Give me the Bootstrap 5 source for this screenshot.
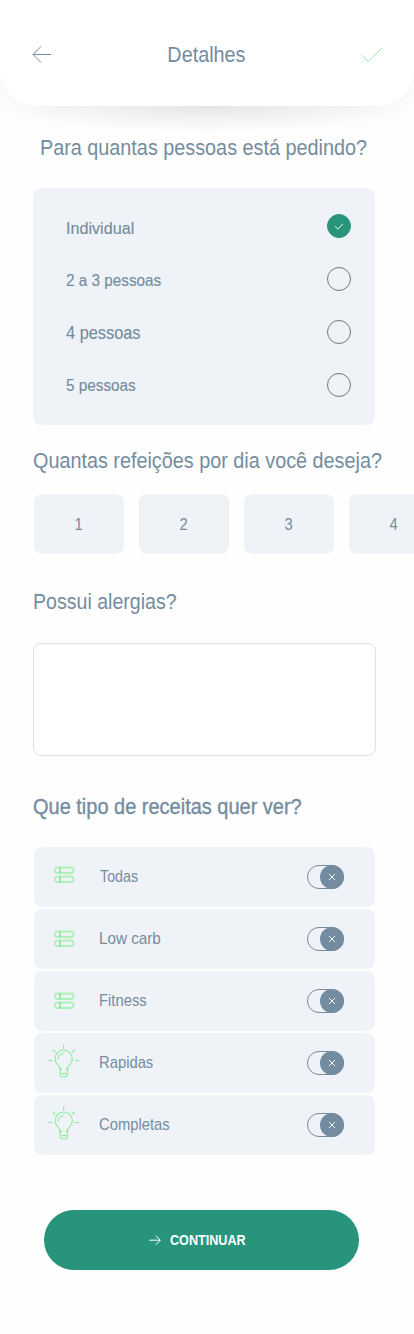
<!DOCTYPE html>
<html lang="pt-BR">
<head>
<meta charset="utf-8">
<meta name="viewport" content="width=device-width, initial-scale=1">
<title>Detalhes</title>
<link href="https://cdn.jsdelivr.net/npm/bootstrap@5.3.0/dist/css/bootstrap.min.css" rel="stylesheet">
<style>
  :root { --slate:#748ca0; --panel:#eff3f8; --brand:#28947c; --mint:#86ee96; }
  body { font-family:"Liberation Sans",Arial,sans-serif; color:var(--slate); background:#fefefe; min-height:1334px; overflow:hidden; }
  svg { display:block; fill:none; flex:none; }
  .topbar { height:106px; padding:3px 31px 0 32px; position:relative; }
  .topbar::before { content:""; position:absolute; inset:0; z-index:-1; border-radius:0 0 36px 36px; background:#fff; box-shadow:0 6px 26px rgba(0,0,0,.04); }
  .topbar::after { content:""; position:absolute; left:0; right:0; top:106px; height:30px; background:radial-gradient(ellipse 190px 28px at 50% 0,rgba(0,0,0,.08),rgba(0,0,0,.035) 50%,transparent); }
  .tx { display:inline-block; white-space:nowrap; transform:scaleX(.9); transform-origin:0 50%; }
  .heading { font-size:22px; line-height:26px; margin:0; font-weight:400; }
  .topbar .tx { transform-origin:center; }
  .topbar svg { margin-bottom:2px; }
  .q-people { margin:29px 0 0 40px; }
  .q-meals { margin:23px 0 0 33px; }
  .q-allergy { margin:35px 0 0 33px; }
  .q-allergy .tx { transform:scaleX(.89); }
  .q-recipes { margin:38px 0 0 33px; }
  .q-recipes .tx { -webkit-text-stroke:.35px var(--slate); transform:scaleX(.908); }
  .people { width:342px; height:237px; margin:27px 0 0 33px; padding:11px 24px 0 33px; background:var(--panel); border-radius:8px; }
  .choice { height:53px; font-size:17px; }
  .choice .tx { transform:scaleX(.9); -webkit-text-stroke:.15px var(--slate); margin-top:3px; }
  .choice .wide { transform:scaleX(.95); margin-top:7px; }
  .choice .next { margin-top:5px; }
  .choice .large { font-size:18px; transform:scaleX(.908); }
  .dot { width:24px; height:24px; border:1px solid #737679; border-radius:50%; }
  .dot.on { background:var(--brand); border-color:var(--brand); }
  .meals { margin:20px 0 0 34px; gap:15px; overflow:hidden; }
  .meal { flex:0 0 90px; height:60px; padding-top:2px; background:var(--panel); border-radius:8px; font-size:17px; }
  .meal .tx { transform:scaleX(.87); transform-origin:center; }
  .notes { width:343px; height:113px; margin:28px 0 0 33px; border:1px solid #dfe1ea; border-radius:8px; resize:none; background:#fff; box-shadow:none; }
  .recipes { margin:27px 0 0 34px; width:341px; gap:2px; }
  .recipe { height:60px; background:var(--panel); border-radius:8px; padding:0 31px 0 14px; font-size:17px; }
  .recipe .tx { transform:scaleX(.87); margin-left:19px; }
  .recipe .slim { transform:scaleX(.84); margin-left:20px; }
  .recipe .roomy { transform:scaleX(.895); }
  .lift { margin-top:-4px; }
  .pill { width:37px; height:24px; border:1px solid var(--slate); border-radius:12px; }
  .knob { width:24px; height:24px; margin:-1px; border-radius:50%; background:var(--slate); }
  .go { width:315px; height:60px; margin:55px 0 0 44px; border:0; border-radius:30px; background:var(--brand); color:#fff; font-size:14px; font-weight:700; padding:0 10px 0 0; }
  .go .tx { transform:scaleX(.9); margin-left:9px; margin-right:-9px; }
</style>
</head>
<body>
<svg width="0" height="0" class="position-absolute" aria-hidden="true">
  <symbol id="bars" viewBox="0 0 32 34">
    <g fill="none" stroke="#86ee96" stroke-opacity=".6">
      <rect x="7" y="9.5" width="18.5" height="5.5" rx="2.6" stroke-width="1.8"/>
      <rect x="7" y="18.5" width="18.5" height="5.5" rx="2.6" stroke-width="1.8"/>
      <path d="M12 9v6.5M12 18v6.5" stroke-width="1.8" stroke-opacity="1"/>
    </g>
  </symbol>
  <symbol id="bulb" viewBox="0 0 32 34">
    <g fill="none" stroke="#86ee96" stroke-width="1.1" stroke-linecap="round">
      <path d="M12.2 25.5c0-2.6-1.2-3.6-2.5-4.7a8.6 8.6 0 1 1 12 0c-1.3 1.1-2.5 2.1-2.5 4.7M11.5 25.4h2M18 25.4h2M12.2 25.5v5q0 2.2 2 2.2h3.2q2 0 2-2.2v-5M14 29.6h3.7M10 15.3c0-3 2.2-5.4 5.4-5.5"/>
      <path d="M15.6.7v3.2M.7 16.5h3.2M27.5 16.5h3.2M5 6l2.1 2.1M26.6 6l-2.1 2.1"/>
    </g>
  </symbol>
  <symbol id="cross" viewBox="0 0 24 24"><path d="M9 9l6 6M15 9l-6 6" stroke="#fff" stroke-width=".9" fill="none"/></symbol>
</svg>

<header class="topbar d-flex align-items-center justify-content-between">
  <svg width="20" height="18" viewBox="0 0 20 18" stroke="#748ca0" stroke-width="1"><path d="M19 9.5H1M9 1.5l-8 8 8 8"/></svg>
  <h1 class="heading"><span class="tx">Detalhes</span></h1>
  <svg width="22" height="18" viewBox="0 0 22 18" stroke="#86ee96" stroke-width=".9"><path d="M1.2 10.2l6.2 6.2L21 3"/></svg>
</header>

<main>
  <h2 class="heading q-people"><span class="tx">Para quantas pessoas está pedindo?</span></h2>
  <section class="people">
    <div class="choice d-flex align-items-center justify-content-between"><span class="tx wide">Individual</span><span class="dot on"><svg width="22" height="22" viewBox="0 0 22 22" stroke="#fff" stroke-width=".9"><path d="M7 11.2l2.8 2.9 5.4-5.4"/></svg></span></div>
    <div class="choice d-flex align-items-center justify-content-between"><span class="tx next">2 a 3 pessoas</span><span class="dot"></span></div>
    <div class="choice d-flex align-items-center justify-content-between"><span class="tx large">4 pessoas</span><span class="dot"></span></div>
    <div class="choice d-flex align-items-center justify-content-between"><span class="tx">5 pessoas</span><span class="dot"></span></div>
  </section>

  <h2 class="heading q-meals"><span class="tx">Quantas refeições por dia você deseja?</span></h2>
  <section class="meals d-flex">
    <div class="meal d-flex align-items-center justify-content-center"><span class="tx">1</span></div>
    <div class="meal d-flex align-items-center justify-content-center"><span class="tx">2</span></div>
    <div class="meal d-flex align-items-center justify-content-center"><span class="tx">3</span></div>
    <div class="meal d-flex align-items-center justify-content-center"><span class="tx">4</span></div>
  </section>

  <h2 class="heading q-allergy"><span class="tx">Possui alergias?</span></h2>
  <textarea class="notes form-control" aria-label="Possui alergias?"></textarea>

  <h2 class="heading q-recipes"><span class="tx">Que tipo de receitas quer ver?</span></h2>
  <section class="recipes d-flex flex-column">
    <div class="recipe d-flex align-items-center"><svg class="lift" width="32" height="34"><use href="#bars"/></svg><span class="tx slim">Todas</span><span class="pill ms-auto d-flex justify-content-end"><svg class="knob"><use href="#cross"/></svg></span></div>
    <div class="recipe d-flex align-items-center"><svg width="32" height="34"><use href="#bars"/></svg><span class="tx roomy">Low carb</span><span class="pill ms-auto d-flex justify-content-end"><svg class="knob"><use href="#cross"/></svg></span></div>
    <div class="recipe d-flex align-items-center"><svg width="32" height="34"><use href="#bars"/></svg><span class="tx">Fitness</span><span class="pill ms-auto d-flex justify-content-end"><svg class="knob"><use href="#cross"/></svg></span></div>
    <div class="recipe d-flex align-items-center"><svg class="lift" width="32" height="34"><use href="#bulb"/></svg><span class="tx">Rapidas</span><span class="pill ms-auto d-flex justify-content-end"><svg class="knob"><use href="#cross"/></svg></span></div>
    <div class="recipe d-flex align-items-center"><svg class="lift" width="32" height="34"><use href="#bulb"/></svg><span class="tx">Completas</span><span class="pill ms-auto d-flex justify-content-end"><svg class="knob"><use href="#cross"/></svg></span></div>
  </section>

  <button class="go btn d-flex align-items-center justify-content-center" type="button">
    <svg width="12" height="12" viewBox="0 0 12 12" stroke="#fff" stroke-width="1"><path d="M.3 6.2h11M6.8 1.7l4.5 4.5-4.5 4.5"/></svg>
    <span class="tx">CONTINUAR</span>
  </button>
</main>
<script src="https://cdn.jsdelivr.net/npm/bootstrap@5.3.0/dist/js/bootstrap.bundle.min.js"></script>
</body>
</html>
